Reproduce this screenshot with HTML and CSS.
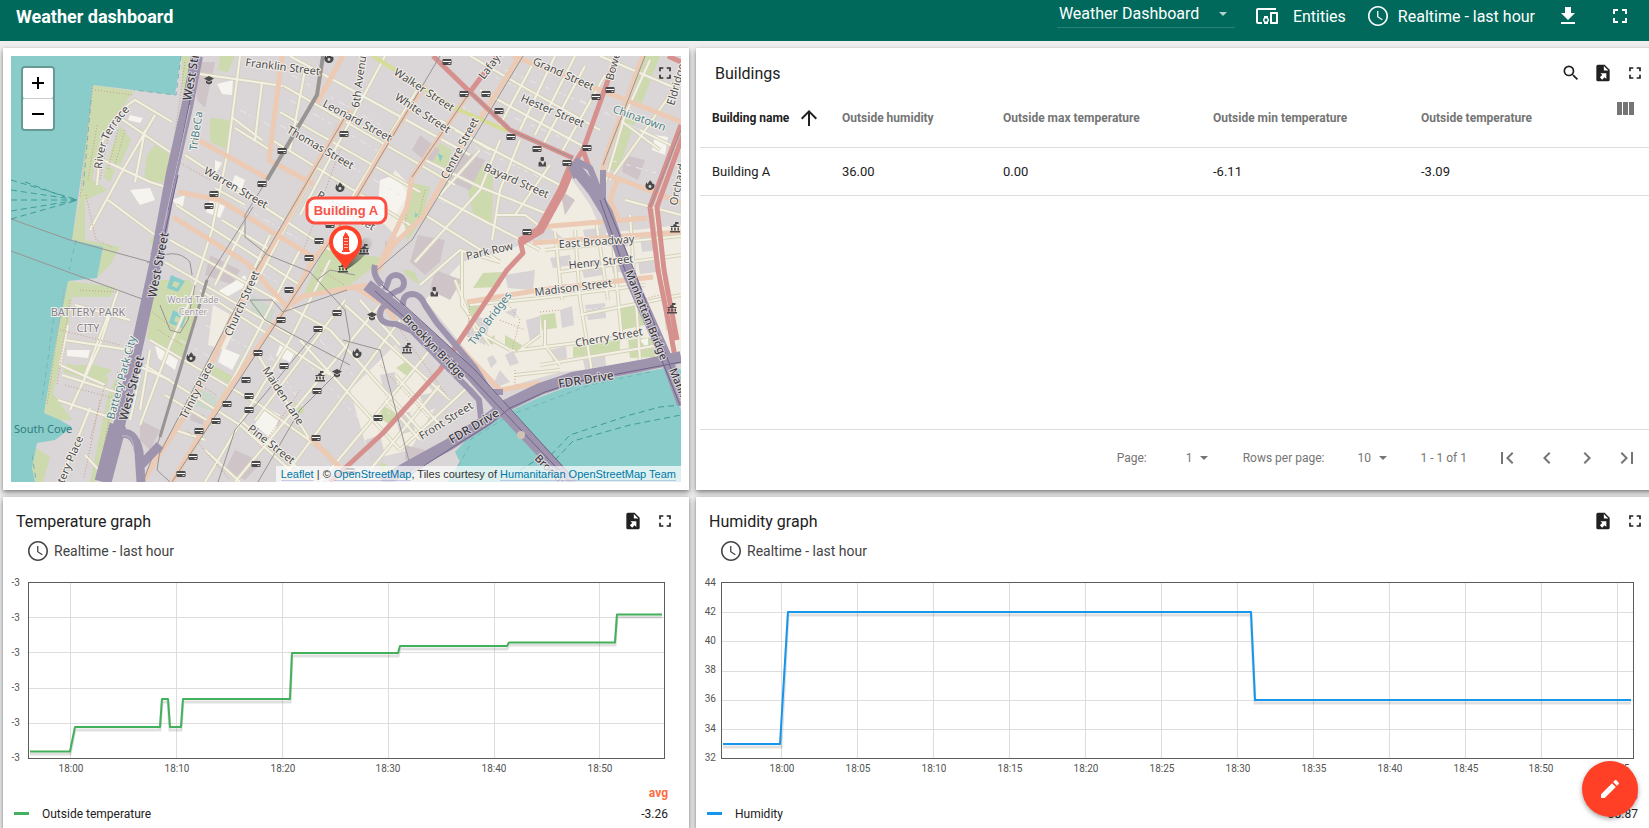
FILE: index.html
```html
<!DOCTYPE html>
<html lang="en">
<head>
<meta charset="utf-8">
<title>Weather dashboard</title>
<meta name="viewport" content="width=device-width, initial-scale=1">
<link rel="stylesheet" href="styles.css">
</head>
<body>
<svg class="sprite" aria-hidden="true">
  <symbol id="i-full" viewBox="0 0 24 24"><path d="M7 14H5v5h5v-2H7v-3zm-2-4h2V7h3V5H5v5zm12 7h-3v2h5v-5h-2v3zM14 5v2h3v3h2V5h-5z"/></symbol>
  <symbol id="i-search" viewBox="0 0 24 24"><path d="M15.5 14h-.79l-.28-.27A6.47 6.47 0 0 0 16 9.5 6.5 6.5 0 1 0 9.5 16c1.61 0 3.09-.59 4.23-1.57l.27.28v.79l5 4.99L20.49 19l-4.99-5zm-6 0C7.01 14 5 11.99 5 9.5S7.01 5 9.5 5 14 7.01 14 9.5 11.99 14 9.5 14z"/></symbol>
  <symbol id="i-export" viewBox="0 0 24 24"><path fill-rule="evenodd" d="M6 2C4.89 2 4 2.9 4 4v16a2 2 0 0 0 2 2h12a2 2 0 0 0 2-2V8l-6-6H6zm7 1.500L18.500 9H13V3.500zM8.930 12.220H16v7.070l-2.120-2.120L11.050 20l-2.830-2.830 2.830-2.820-2.120-2.130z"/></symbol>
  <symbol id="i-download" viewBox="0 0 24 24"><path d="M19 9h-4V3H9v6H5l7 7 7-7zM5 18v2h14v-2H5z"/></symbol>
  <symbol id="i-devices" viewBox="0 0 24 24"><path d="M3 6h18V4H3c-1.1 0-2 .9-2 2v12c0 1.1.9 2 2 2h4v-2H3V6zm10 6H9v1.78c-.61.55-1 1.33-1 2.22s.39 1.67 1 2.22V20h4v-1.78c.61-.55 1-1.34 1-2.22s-.39-1.67-1-2.22V12zm-2 5.5c-.83 0-1.5-.67-1.5-1.5s.67-1.5 1.5-1.5 1.5.67 1.5 1.5-.67 1.5-1.5 1.5zM22 8h-6c-.5 0-1 .5-1 1v10c0 .5.5 1 1 1h6c.5 0 1-.5 1-1V9c0-.5-.5-1-1-1zm-1 10h-4v-8h4v8z"/></symbol>
  <symbol id="i-clock" viewBox="0 0 24 24"><path d="M11.99 2C6.47 2 2 6.48 2 12s4.47 10 9.99 10C17.52 22 22 17.52 22 12S17.52 2 11.99 2zM12 20.4c-4.6 0-8.4-3.8-8.4-8.4S7.4 3.6 12 3.6s8.4 3.8 8.4 8.4-3.8 8.4-8.4 8.4z"/><path d="M12.4 7H11.1v6l4.9 3.3.7-1.1-4.3-2.8z"/></symbol>
  <symbol id="i-columns" viewBox="0 0 24 24"><path d="M10 18h5V5h-5v13zm-6 0h5V5H4v13zM16 5v13h5V5h-5z"/></symbol>
  <symbol id="i-up" viewBox="0 0 24 24"><path d="M4 12l1.41 1.41L11 7.83V20h2V7.83l5.58 5.59L20 12l-8-8-8 8z"/></symbol>
  <symbol id="i-first" viewBox="0 0 24 24"><path d="M18.41 16.59L13.82 12l4.59-4.59L17 6l-6 6 6 6zM6 6h2v12H6z"/></symbol>
  <symbol id="i-prev" viewBox="0 0 24 24"><path d="M15.41 7.41L14 6l-6 6 6 6 1.41-1.41L10.83 12z"/></symbol>
  <symbol id="i-next" viewBox="0 0 24 24"><path d="M10 6L8.59 7.41 13.17 12l-4.58 4.59L10 18l6-6z"/></symbol>
  <symbol id="i-last" viewBox="0 0 24 24"><path d="M5.59 7.41L10.18 12l-4.59 4.59L7 18l6-6-6-6zM16 6h2v12h-2z"/></symbol>
  <symbol id="i-edit" viewBox="0 0 24 24"><path d="M3 17.25V21h3.75L17.81 9.94l-3.75-3.75L3 17.25zM20.71 7.04c.39-.39.39-1.02 0-1.41l-2.34-2.34c-.39-.39-1.02-.39-1.41 0l-1.83 1.83 3.75 3.75 1.83-1.83z"/></symbol>
  <symbol id="i-caret" viewBox="0 0 10 5"><path d="M0 0h10L5 5z"/></symbol>
</svg>

<header class="topbar">
  <h1 class="topbar-title">Weather dashboard</h1>
  <nav class="topbar-nav">
    <label class="state-select">
      <select aria-label="Dashboard"><option>Weather Dashboard</option></select>
      <svg class="caret"><use href="#i-caret"/></svg>
    </label>
    <button class="nav-button entities" type="button"><svg class="icon"><use href="#i-devices"/></svg>Entities</button>
    <button class="nav-button time" type="button"><svg class="icon"><use href="#i-clock"/></svg>Realtime - last hour</button>
    <button class="nav-button download" type="button" aria-label="Export"><svg class="icon"><use href="#i-download"/></svg></button>
    <button class="nav-button fullscreen" type="button" aria-label="Fullscreen"><svg class="icon"><use href="#i-full"/></svg></button>
  </nav>
</header>

<main class="dashboard">
  <section class="card map-card" aria-label="Map">
    <div class="map">
      <svg class="map-canvas" viewBox="11 56 670 426" preserveAspectRatio="xMidYMid slice" role="img" aria-label="Lower Manhattan">
        <defs>
          <linearGradient id="shade" x1="0" y1="1" x2="1" y2="0"><stop offset="0" stop-color="#222" stop-opacity=".7"/><stop offset="1" stop-color="#222" stop-opacity="0"/></linearGradient>
          <g id="bus"><rect x="-4.5" y="-3" width="9" height="6" rx="1"/><path d="M-4 -.5H4" stroke="#fff" stroke-width="1"/><path d="M1.500 1.500H3.500" stroke="#fff" stroke-width=".8"/></g>
          <g id="fire"><path d="M-4.5 0C-5 3 -2 5 0 5S5 3 4.5 0C4 -2 3 -1 2.500 -1C2.500 -3 1 -3 0 -5C-.5 -3 -2 -3 -2 -1C-3 -1 -3 -2 -3.500 -3Z"/><circle cy="1.500" r="1.400" fill="#ddd"/></g>
          <g id="cap"><path d="M-5 -1.500L0 -4L5 -1.500L0 1.500ZM-3 .5L0 2.500L3 .5V3L0 4.500L-3 3Z"/></g>
          <g id="hall"><path d="M-5 4H5V5.500H-5ZM-4 -1H4L5 0H-5ZM-4 .5H-2.500V3.500H-4ZM-.8 .5H.8V3.500H-.8ZM2.500 .5H4V3.500H2.500ZM-2 -1A2 2 0 0 1 2 -1ZM0 -5H3.500V-3H.8V-1H0Z"/></g>
          <g id="cop"><rect x="-1.500" y="-5" width="3.500" height="4" rx="1"/><path d="M-3.500 4.500V1Q-3.500 -.5 -1.500 -.5L1 3L3 -1L4 1V4.500Z"/></g>
          <g id="streets">
            <path d="M200 74L283 86M290 56L470 155M284 86L455 185M280 112L420 192M272 140L410 225M185 155L330 250M176 205L300 285M170 240L330 330M165 262L290 335M200 290L330 375M150 340L260 405L330 455M145 365L240 425L290 470M165 395L215 425M175 430L205 440M205 450L240 482M233 118L262 140M235 128L270 150M215 188L245 205M222 220L270 250"/>
            <path d="M240 56L228 150L212 230L190 300L170 345L140 425M262 82L255 140M305 70L290 150M385 56L300 215M420 85L335 225M347 110L255 285M245 225L215 285M270 235L225 330M300 250L235 375L190 455M330 260L290 340L205 482M250 290L205 370"/>
            <path d="M470 56L520 85L600 130M480 90L590 150M455 130L560 185M425 160L480 187L550 215M440 120L490 150M555 56L520 130M585 66L540 150M605 75L560 155M535 60L500 125M575 56L535 135M500 140L480 190L415 262M480 150L440 195M520 140L500 190L492 240M550 165L515 215M435 195L540 250M425 215L500 262M600 56L680 90M620 120L660 150M650 60L625 115L600 200M670 95L610 180M640 130L681 150M625 200L681 215M497 215H525L545 230"/>
            <path d="M545 250L681 236M560 272L681 255M580 315L681 295M470 305L540 298L645 285M545 320L545 345L560 365M575 230L580 300L592 372M555 232L562 300M596 220L608 300M630 215L640 360M655 210L668 330M610 210L622 340M540 335L520 350L640 335M515 375L560 370M540 365L660 345M455 280L475 330L510 350M462 250V305L490 345M420 285L460 250L500 262"/>
            <path d="M258 355L310 440M240 420L315 482M300 340L400 450M330 330L420 430M345 305L450 400M360 300L400 345M400 320L280 482M430 350L320 482M440 385L370 470M380 305L235 482M345 300L255 420M470 385L400 450M385 400L420 440M395 375L440 425"/>
            <path d="M97 185L100 150Q110 115 135 100L172 122M120 118L170 152M155 115L120 175L90 230M103 160L150 182L166 187M108 200L155 235M145 130L135 182M118 290L100 345L70 410M65 340L130 350M62 375L125 395M58 400L112 418M90 408L60 482M125 360L170 380M150 350L140 410M85 455L110 482M68 325L60 365L105 385M110 310L85 375M140 375L130 420M75 305L130 320"/>
          </g>
        </defs>
        <rect class="land" x="11" y="56" width="670" height="426"/>
        <path class="pale" d="M462 262L540 240L681 225V360L560 372L497 390L462 345L425 300Z M213 305L240 320L225 350L208 345Z M395 170L425 200L400 240L375 215Z M350 390L395 345L440 400L410 450L370 460Z M567 172L590 205L620 270L580 250L545 225Z"/>
        <path class="park" d="M93 85L134 91L125 103L108 125L98 150L92 180L108 190L85 200L85 240L120 247L110 265L97 278L103 247L72 240L80 197Z
          M155 145L170 155L167 183L144 180L147 155Z M210 118L231 120L228 150L210 142Z M220 56H235L228 72L218 70Z M182 56H190L188 90L182 95Z
          M480 163L493 173L492 227L473 213L467 187Z M412 183L430 187L423 217L407 242L404 220Z M440 143L452 150L446 172L428 160Z
          M643 56H660L642 103L632 100Z M625 110L637 117L617 173L607 167Z M330 240L362 255L385 258L350 285L303 296L318 262Z
          M157 280H190L200 300L183 357L147 338L152 293Z M68 281L115 287L110 297L72 297L67 337L53 393L72 420L60 420L44 413L55 347Z
          M67 363L108 377L107 385L63 372Z M35 447L50 457L43 482H35L32 468Z M108 395L120 370L110 430L95 482H90Z M155 235L165 215L158 262L150 240Z
          M213 365L235 378L230 384L210 373Z M483 273L503 272L500 287L473 288Z M540 315L555 313L557 328L542 330Z M573 347L620 340V352L573 357Z
          M628 340L653 337L655 357L630 358Z M620 307L643 300L645 325L622 330Z M467 302L482 300L473 320Z M403 269L415 272L420 285L405 275Z M112 370L100 380L75 365H95Z
          M120 125L131 140L120 165L108 160Z M106 165L115 170L110 182L104 178Z M383 405L397 415L390 425L380 418Z M405 362L415 370L410 378L396 368Z M485 340L495 335L493 345Z M505 335L522 345L518 352L505 345Z M398 388L392 398Z M381 462L395 470L388 475L378 470Z M292 400L305 410L300 415Z"/>
        <path class="sage" d="M195 387L217 397L215 412L193 405Z M252 295L275 310L270 325L250 315Z"/>
        <path class="water-fill" d="M11 56H181L175 95L134 90L93 85L85 150L72 240L103 247L97 278L68 281L55 347L44 413L60 420L72 427L55 440L37 443L32 468L35 482H11Z
          M508 412L540 397L573 385L665 368L681 410V482H447L460 462L455 452L473 433L493 420Z M681 370V395L675 366Z
          M171 275L185 281L178 292L167 288Z M173 310L186 317L182 328L169 323Z M438 153L443 156L440 162Z M415 212L418 215L415 218Z"/>
        <path class="inner" d="M174 281L180 283L177 288L172 286Z M176 316L181 318L178 323L174 321Z"/>
        <path class="pink" d="M195 62H215L205 108L197 100Z M420 135L440 150L430 165L412 150Z M460 150L485 160L470 190L445 180Z M418 235L445 240L440 262L425 275L410 262Z M435 270L462 280L450 300L430 290Z M625 155L645 160L638 180L622 172Z M192 412L205 415L203 425L190 420Z M235 450L262 462L245 480L225 470Z M140 420L160 430L150 450L140 440Z M405 445L425 450L420 465L405 460Z M210 255L240 270L232 285L205 275Z M385 240L395 247L385 258Z M345 248L358 256L348 264L335 256Z M560 190L575 200L565 215Z"/>
        <path class="houses" d="M470 315L490 320L485 345L465 335ZM526 320L540 316V338L530 342ZM580 262L600 259L603 275L584 278ZM610 258L628 255L632 270L613 273ZM585 305L605 303L606 318L588 320ZM550 258L570 255L572 265L553 268ZM583 230L605 227L606 235L585 238ZM640 236L655 234L658 250L642 252ZM583 360L605 355L606 366L585 369ZM505 312L517 308L515 318ZM505 275L535 270L533 290L508 288ZM490 390L500 370L510 382ZM400 350L415 345L420 360L405 362ZM380 375L395 372L398 390L385 395ZM420 395L440 392L445 405L425 412ZM395 415L410 412L415 430L400 435ZM365 440L380 435L385 455L370 462ZM557 285L566 284L568 296L560 297ZM487 358L493 355L497 362L491 368ZM505 355L513 351L519 363L510 366ZM612 235L628 233L630 246L614 248ZM638 262L655 260L657 272L640 274ZM560 310L572 306L574 325L562 328ZM550 350L566 346L567 358L553 361Z"/>
        <path class="white" d="M217 84L233 80L232 95L222 94ZM130 115L143 118L140 123L128 120ZM217 292L245 275L248 285L225 298ZM223 348L240 355L232 370L218 362ZM262 405L280 415L272 440L255 425ZM155 345L178 360L175 370L158 358ZM67 350L90 350L88 358L67 356ZM215 160L222 163L215 175ZM380 180L395 175L408 195L395 215L378 205ZM655 135L668 137L665 155L652 150ZM640 340L648 338V350ZM130 190L150 188L155 200L140 205ZM395 195L400 200L393 205ZM172 200L185 195L182 210ZM280 345L295 352L290 362L276 356ZM235 175L245 180L240 195L230 188ZM210 200L225 206L220 218L206 212Z"/>
        <g class="specks"><path d="M300 62L345 88M292 75L380 125M290 100L380 152M280 125L400 195M240 205L300 240M190 230L290 290M240 110L275 128M480 70L545 100M490 108L580 145M460 140L545 180M505 70L600 110M460 105L490 125M580 100L640 130M440 200L530 245M560 240L681 228M570 265L681 248M585 310L660 300M300 355L360 420M270 355L305 410M320 340L400 425M205 325L290 370M180 340L250 380M610 160L681 180M640 75L681 90M500 250L545 225"/></g>
        <use href="#streets" class="street-case"/>
        <use href="#streets" class="street"/>
        <path class="paths" d="M93 85L80 197M95 90L132 95M86 195L96 240L112 247M97 125L88 180M110 128L100 180M118 130L108 170M125 130L115 165M185 62L170 170M172 190L150 255M64 290L47 405M70 300L57 385M80 290L118 292M100 400L84 478M118 372L98 478M105 385L90 440M158 330L182 345M150 310L175 330M210 180L175 160M60 330L120 345M65 385L120 400M410 185L405 225M425 190L418 220M340 150L300 260M320 270L345 285M470 300L468 340M505 300L520 320L512 350M515 370L515 385H540M540 312L560 310M400 330L450 400M380 365L430 420M500 320L525 330M640 300L660 295M200 385L218 396M187 430L230 480M300 390L260 450"/>
        <path class="orange" d="M198 140L267 178M282 56L269 160L313 184M178 192L220 200L313 257M173 217L247 263L287 307L303 296L367 285M343 56L317 103M425 85L387 143L333 237L313 260L290 303L263 340L233 383L203 430L172 482M350 110L317 163L287 220L258 270L233 317L200 387L180 423L160 453L143 482M470 92L412 177L407 207L377 270M520 56L487 108L460 150L423 217L395 243L375 275M513 56L593 87L681 122M603 173L640 187L681 203M617 180L610 200L618 218M540 227L647 218M533 243L681 232M467 302L540 290L653 277M643 56L607 153L602 172M460 348L500 390L540 383M310 437L350 478M355 287L385 305L395 320"/>
        <path class="yellow" d="M373 56L453 107L507 131"/>
        <path class="red" d="M433 56L470 92L510 130L573 158M470 92L497 56M617 56L607 83L583 150L570 170M520 240L523 253L507 270L460 340L440 370L383 433L330 482M681 125L650 207L658 270L670 330L676 362M683 135L657 207L664 270L677 340M583 150L590 170M668 56L681 62"/>
        <path class="red wide" d="M573 163L562 190L540 230L520 242"/>
        <path class="rail" d="M323 56L317 95L267 180L245 215L245 237L268 255L310 272L345 310L350 340L340 370L300 410L258 482M253 207L213 270L207 280L185 353L160 437L143 482M348 112L250 280L160 453M440 56L333 237L262 345L172 482M523 56L412 240L377 270M470 92L510 130L573 158M470 92L412 177M645 56L603 165M650 207L681 130M347 290L318 300L283 312L272 300L250 300L265 320L350 365M318 330L235 430L218 482M317 280L330 270L355 275M343 340L380 350L410 465M11 219L70 240L150 262M11 251L90 280L145 300M147 263Q175 245 190 262L192 275M160 305L170 330L180 333L188 320L195 285M160 450L157 470L170 482"/>
        <path class="rail thick" d="M323 56L317 95L267 180"/>
        <path class="rail mid" d="M207 280L185 353L160 437"/>
        <path class="ferry" d="M11 180L78 200M11 190L78 200M11 200H78M11 211L78 200M11 219L78 200M25 182L65 197M551 455L570 435L630 415L660 407L681 405M555 460L573 441L630 425L681 415M520 470L545 455"/>
        <path class="shore" d="M181 56L176 95L134 90M76 240L69 270M91 100L83 190M55 310L42 400M32 455L36 480M470 440L510 415L590 385L650 372M458 466L470 445"/>
        <g class="motor-case">
          <path class="west" d="M197 56L187 107L172 173L155 265L145 310L133 365L118 430"/>
          <path class="west-end" d="M118 425L103 482"/>
          <path class="ramp" d="M118 435Q134 428 139 452L141 482M160 445L141 465"/>
          <path class="bridge" d="M367 285L403 313L470 373L500 407L540 450L572 484M382 482L410 466L450 444L487 420L507 405L540 389L573 378L640 366L681 357M573 165L593 190L607 213L627 270L667 360L683 404"/>
          <path class="loop" d="M375 265Q372 275 382 285M385 290L388 282A8 8 0 1 1 397 291L388 296M403 306Q402 294 413 294Q421 295 425 305L437 323L475 368L490 392H503M407 313L392 305Q380 304 380 315Q380 324 396 324L412 331L445 365L470 390L479 400L481 418M575 160L590 168L605 205M576 178L572 168L574 162M603 170V205"/>
          <path class="lane" d="M375 291L403 316L470 376L570 482M382 285L415 315L475 370L575 480M405 478L450 449L490 424L510 408L545 392L575 382L681 362M600 200L625 270L680 405M604 198L634 270L681 395M190 100L168 210M178 175L160 255"/>
          <path class="lane-light" d="M190 105L163 230M122 436Q133 433 134 450"/>
        </g>
        <g class="poi">
          <use href="#bus" x="282" y="151"/><use href="#bus" x="262" y="184"/><use href="#bus" x="214" y="194"/><use href="#bus" x="209" y="206"/><use href="#bus" x="319" y="241"/><use href="#bus" x="309" y="258"/><use href="#bus" x="330" y="225"/><use href="#bus" x="344" y="134"/>
          <use href="#bus" x="447" y="62"/><use href="#bus" x="464" y="94"/><use href="#bus" x="486" y="94"/><use href="#bus" x="499" y="111"/><use href="#bus" x="511" y="137"/><use href="#bus" x="537" y="149"/><use href="#bus" x="567" y="163"/><use href="#bus" x="587" y="148"/><use href="#bus" x="596" y="97"/><use href="#bus" x="610" y="90"/><use href="#bus" x="527" y="232"/>
          <use href="#bus" x="289" y="290"/><use href="#bus" x="281" y="320"/><use href="#bus" x="318" y="329"/><use href="#bus" x="337" y="313"/><use href="#bus" x="258" y="353"/><use href="#bus" x="284" y="366"/><use href="#bus" x="246" y="380"/><use href="#bus" x="249" y="396"/><use href="#bus" x="249" y="410"/><use href="#bus" x="227" y="404"/><use href="#bus" x="216" y="421"/><use href="#bus" x="199" y="431"/><use href="#bus" x="193" y="457"/><use href="#bus" x="181" y="474"/><use href="#bus" x="256" y="464"/><use href="#bus" x="316" y="438"/><use href="#bus" x="317" y="391"/><use href="#bus" x="378" y="418"/><use href="#bus" x="350" y="471"/>
          <use href="#fire" x="329" y="58"/><use href="#fire" x="340" y="187"/><use href="#fire" x="650" y="185"/><use href="#fire" x="191" y="357"/><use href="#fire" x="357" y="353"/>
          <use href="#cap" x="209" y="80"/><use href="#cap" x="337" y="373"/><use href="#cap" x="372" y="316"/>
          <use href="#hall" x="675" y="227"/><use href="#hall" x="364" y="249"/><use href="#hall" x="320" y="376"/><use href="#hall" x="407" y="348"/><use href="#hall" x="672" y="308"/><use href="#hall" x="343" y="267"/>
          <use href="#cop" x="542" y="162"/><use href="#cop" x="434" y="292"/>
          <circle cx="521" cy="435" r="4" fill="#cfc4b4"/>
        </g>
        <g class="names">
          <text transform="translate(245 66) rotate(7)">Franklin Street</text>
          <text transform="translate(322 106) rotate(28)">Leonard Street</text>
          <text transform="translate(286 132) rotate(30)">Thomas Street</text>
          <text transform="translate(203 173) rotate(30)">Warren Street</text>
          <text transform="translate(316 197) rotate(31)">Reade Street</text>
          <text transform="translate(393 74) rotate(33)">Walker Street</text>
          <text transform="translate(394 99) rotate(33)">White Street</text>
          <text transform="translate(532 64) rotate(24)">Grand Street</text>
          <text transform="translate(520 101) rotate(23)">Hester Street</text>
          <text transform="translate(483 170) rotate(24)">Bayard Street</text>
          <text transform="translate(467 260) rotate(-13)">Park Row</text>
          <text transform="translate(559 248) rotate(-4)">East Broadway</text>
          <text transform="translate(569 269) rotate(-6)">Henry Street</text>
          <text transform="translate(535 296) rotate(-7)">Madison Street</text>
          <text transform="translate(576 347) rotate(-10)">Cherry Street</text>
          <text transform="translate(422 440) rotate(-32)">Front Street</text>
          <text transform="translate(447 180) rotate(-62)">Centre Street</text>
          <text transform="translate(359 108) rotate(-82)">6th Avenue</text>
          <text transform="translate(484 80) rotate(-53)">Lafayette</text>
          <text transform="translate(613 81) rotate(-75)">Bowery</text>
          <text transform="translate(674 106) rotate(-74)">Eldridge</text>
          <text transform="translate(677 206) rotate(-78)">Orchard</text>
          <text><textPath href="#terrace">River Terrace</textPath></text>
          <text transform="translate(231 337) rotate(-66)">Church Street</text>
          <text transform="translate(186 420) rotate(-63)">Trinity Place</text>
          <text transform="translate(262 370) rotate(57)">Maiden Lane</text>
          <text transform="translate(247 430) rotate(38)">Pine Street</text>
          <text transform="translate(57 500) rotate(-67)">Battery Place</text>
          <g class="major">
            <text transform="translate(191 101) rotate(-80)">West Street</text>
            <text transform="translate(156 298) rotate(-79)">West Street</text>
            <text transform="translate(127 421) rotate(-75)">West Street</text>
            <text transform="translate(559 388) rotate(-9)">FDR Drive</text>
            <text transform="translate(452 444) rotate(-31)">FDR Drive</text>
            <g class="snug">
              <text transform="translate(402 319) rotate(46)">Brooklyn Bridge</text>
              <text transform="translate(534 459) rotate(45)">Brooklyn Bridge</text>
              <text transform="translate(625 272) rotate(68)">Manhattan Bridge</text>
              <text transform="translate(669 370) rotate(68)">Manhattan</text>
            </g>
          </g>
          <g class="area">
            <text transform="translate(612 112) rotate(20)">Chinatown</text>
            <text transform="translate(474 346) rotate(-53)">Two Bridges</text>
            <text transform="translate(197 151) rotate(-82)">TriBeCa</text>
            <text transform="translate(114 420) rotate(-75)">Battery Park City</text>
            <text class="cove" x="14" y="433">South Cove</text>
          </g>
          <g class="place"><text x="88" y="316">BATTERY PARK</text><text x="88" y="332">CITY</text></g>
          <g class="place small"><text x="193" y="303">World Trade</text><text x="193" y="315">Center</text></g>
        </g>
        <path id="terrace" fill="none" d="M102 169Q103 135 132 108L140 100"/>
        <g class="marker">
          <path class="marker-shade" d="M346 270L355 250L364 238Q374 236 372 244Q366 258 346 270Z" fill="url(#shade)"/>
          <rect x="307" y="198" width="79" height="25" rx="8"/>
          <text x="346" y="215">Building A</text>
          <path class="pin" d="M345.500 225.500A16.500 16.500 0 0 1 362 242C362 254 350 260 345.500 270C341 260 329 254 329 242A16.500 16.500 0 0 1 345.500 225.500Z"/>
          <circle cx="345.500" cy="242" r="12.500"/>
          <path class="tower" d="M345.500 232L348 235V236H349V250.500H350V252H342V250.500H343V236H344V235Z"/>
          <path class="tower-lines" d="M344 238.500H348M344 241.500H348M344 244.500H348M344 247.500H348"/>
        </g>
      </svg>
      <div class="zoom-control">
        <button type="button" aria-label="Zoom in"><svg viewBox="0 0 12 12"><path d="M6 0V12M0 6H12"/></svg></button>
        <button type="button" aria-label="Zoom out"><svg viewBox="0 0 12 12"><path d="M0 6H12"/></svg></button>
      </div>
      <button class="icon-button map-full" type="button" aria-label="Fullscreen"><svg class="icon small-icon"><use href="#i-full"/></svg></button>
      <p class="attribution"><a href="#leaflet">Leaflet</a> | © <a href="#osm">OpenStreetMap</a>, Tiles courtesy of <a href="#hot">Humanitarian OpenStreetMap Team</a></p>
    </div>
  </section>

  <section class="card table-card">
    <div class="card-head table-head">
      <h2>Buildings</h2>
      <div class="card-actions">
        <button class="icon-button" type="button" aria-label="Search"><svg class="icon small-icon"><use href="#i-search"/></svg></button>
        <button class="icon-button" type="button" aria-label="Export"><svg class="icon small-icon"><use href="#i-export"/></svg></button>
        <button class="icon-button" type="button" aria-label="Fullscreen"><svg class="icon small-icon"><use href="#i-full"/></svg></button>
      </div>
    </div>
    <table class="entities-table">
      <colgroup><col class="c-name"><col class="c-hum"><col class="c-max"><col class="c-min"><col><col class="c-tools"></colgroup>
      <thead>
        <tr>
          <th class="sorted" scope="col"><span class="sort">Building name<svg class="icon"><use href="#i-up"/></svg></span></th>
          <th scope="col">Outside humidity</th>
          <th scope="col">Outside max temperature</th>
          <th scope="col">Outside min temperature</th>
          <th scope="col">Outside temperature</th>
          <td class="tools"><button class="icon-button" type="button" aria-label="Columns to display"><svg class="icon"><use href="#i-columns"/></svg></button></td>
        </tr>
      </thead>
      <tbody>
        <tr><td>Building A</td><td>36.00</td><td>0.00</td><td>-6.11</td><td>-3.09</td><td></td></tr>
      </tbody>
    </table>
    <div class="pager">
      <label class="pager-field page">Page:<span class="pick"><select><option>1</option></select><svg class="caret"><use href="#i-caret"/></svg></span></label>
      <label class="pager-field rows">Rows per page:<span class="pick"><select><option>10</option></select><svg class="caret"><use href="#i-caret"/></svg></span></label>
      <span class="range">1 - 1 of 1</span>
      <div class="pager-buttons">
        <button class="icon-button" type="button" aria-label="First page"><svg class="icon"><use href="#i-first"/></svg></button>
        <button class="icon-button" type="button" aria-label="Previous page"><svg class="icon"><use href="#i-prev"/></svg></button>
        <button class="icon-button" type="button" aria-label="Next page"><svg class="icon"><use href="#i-next"/></svg></button>
        <button class="icon-button" type="button" aria-label="Last page"><svg class="icon"><use href="#i-last"/></svg></button>
      </div>
    </div>
  </section>

  <section class="card chart-card">
    <div class="card-head">
      <h2>Temperature graph</h2>
      <div class="card-actions">
        <button class="icon-button" type="button" aria-label="Export"><svg class="icon small-icon"><use href="#i-export"/></svg></button>
        <button class="icon-button" type="button" aria-label="Fullscreen"><svg class="icon small-icon"><use href="#i-full"/></svg></button>
      </div>
    </div>
    <button class="time-window" type="button"><svg class="icon"><use href="#i-clock"/></svg>Realtime - last hour</button>
    <svg class="chart" viewBox="3 570 686 205" role="img" aria-label="Temperature graph">
      <path class="grid" d="M70.500 583V758M176.500 583V758M282.500 583V758M388.500 583V758M494.500 583V758M599.500 583V758M29 617.500H664M29 652.500H664M29 688.500H664M29 723.500H664"/>
      <rect class="frame" x="28.500" y="582.500" width="636" height="176"/>
      <path class="line-shade" d="M30 754H70L75 730H160L162 702H168L170 730H181L183 702H290L292 656H398L400 649H507L509 645H615L617 617H662"/>
      <path class="line green" d="M30 751.500H70L75 727H160L162 699H168L170 727H181L183 699H290L292 653H398L400 646H507L509 642.500H615L617 614.500H662"/>
      <g class="ticks y"><text x="20" y="586">-3</text><text x="20" y="621">-3</text><text x="20" y="656">-3</text><text x="20" y="691">-3</text><text x="20" y="726">-3</text><text x="20" y="761">-3</text></g>
      <g class="ticks x"><text x="71" y="772">18:00</text><text x="177" y="772">18:10</text><text x="283" y="772">18:20</text><text x="388" y="772">18:30</text><text x="494" y="772">18:40</text><text x="600" y="772">18:50</text></g>
    </svg>
    <table class="legend">
      <thead><tr><td></td><td></td><th scope="col">avg</th></tr></thead>
      <tbody><tr><td class="swatch-cell"><span class="swatch green-bg"></span></td><td>Outside temperature</td><td class="value">-3.26</td></tr></tbody>
    </table>
  </section>

  <section class="card chart-card">
    <div class="card-head">
      <h2>Humidity graph</h2>
      <div class="card-actions">
        <button class="icon-button" type="button" aria-label="Export"><svg class="icon small-icon"><use href="#i-export"/></svg></button>
        <button class="icon-button" type="button" aria-label="Fullscreen"><svg class="icon small-icon"><use href="#i-full"/></svg></button>
      </div>
    </div>
    <button class="time-window" type="button"><svg class="icon"><use href="#i-clock"/></svg>Realtime - last hour</button>
    <svg class="chart" viewBox="696 570 963 205" role="img" aria-label="Humidity graph">
      <path class="grid" d="M781.500 583V758M857.500 583V758M933.500 583V758M1009.500 583V758M1085.500 583V758M1161.500 583V758M1237.500 583V758M1313.500 583V758M1389.500 583V758M1465.500 583V758M1541.500 583V758M1617.500 583V758M722 612.500H1633M722 641.500H1633M722 671.500H1633M722 700.500H1633M722 729.500H1633"/>
      <rect class="frame" x="721.500" y="582.500" width="912" height="176"/>
      <path class="line-shade" d="M723 747H781L788 615H1251L1255 703H1631"/>
      <path class="line blue" d="M723 744H780L788 612H1251L1255 700H1631"/>
      <g class="ticks y"><text x="716" y="586">44</text><text x="716" y="615">42</text><text x="716" y="644">40</text><text x="716" y="673">38</text><text x="716" y="702">36</text><text x="716" y="732">34</text><text x="716" y="761">32</text></g>
      <g class="ticks x"><text x="782" y="772">18:00</text><text x="858" y="772">18:05</text><text x="934" y="772">18:10</text><text x="1010" y="772">18:15</text><text x="1086" y="772">18:20</text><text x="1162" y="772">18:25</text><text x="1238" y="772">18:30</text><text x="1314" y="772">18:35</text><text x="1390" y="772">18:40</text><text x="1466" y="772">18:45</text><text x="1541" y="772">18:50</text><text x="1617" y="772">18:55</text></g>
    </svg>
    <table class="legend">
      <thead><tr><td></td><td></td><th scope="col">avg</th></tr></thead>
      <tbody><tr><td class="swatch-cell"><span class="swatch blue-bg"></span></td><td>Humidity</td><td class="value">38.87</td></tr></tbody>
    </table>
  </section>
</main>

<button class="fab" type="button" aria-label="Edit dashboard"><svg class="icon"><use href="#i-edit"/></svg></button>
</body>
</html>
```

FILE: styles.css
```css
* { box-sizing: border-box; }
body {
  margin: 0;
  min-height: 100vh;
  display: flex;
  flex-direction: column;
  overflow: hidden;
  background: #eee;
  color: #212121;
  font-family: Roboto, "Liberation Sans", sans-serif;
  font-size: 13px;
}
h1, h2, p { margin: 0; }
button, select {
  margin: 0;
  padding: 0;
  border: 0;
  background: none;
  color: inherit;
  font: inherit;
  cursor: pointer;
}
select { appearance: none; }
.sprite { position: absolute; width: 0; height: 0; }
.icon { width: 24px; height: 24px; fill: currentColor; flex: none; display: block; }
.small-icon { width: 20px; height: 20px; }
.icon-button { display: grid; place-items: center; width: 32px; height: 32px; }

/* Top bar */
.topbar {
  display: flex;
  justify-content: space-between;
  align-items: flex-start;
  min-height: 41px;
  padding: 0 17px 0 16px;
  background: #00695c;
  color: #fff;
}
.topbar-title { font-size: 18px; font-weight: 700; line-height: 34px; }
.topbar-nav { display: flex; align-items: center; min-height: 32px; font-size: 16px; }
.state-select {
  display: flex;
  align-items: center;
  width: 178px;
  height: 24px;
  margin-right: 20px;
  padding: 0 8px 4px 2px;
  border-bottom: 1px solid #2b8177;
}
.state-select select { flex: 1; }
.state-select .caret { color: #b2d2ce; }
.caret { width: 8px; height: 4px; fill: currentColor; flex: none; }
.nav-button { display: flex; align-items: center; gap: 8px; }
.entities { gap: 14px; margin-right: 20px; }
.time { margin-right: 21px; }
.download { margin-right: 28px; }

/* Grid of widgets */
.dashboard {
  flex: 1;
  display: grid;
  grid-template-columns: 686fr 963fr;
  grid-template-rows: auto 1fr;
  gap: 7px;
  margin-right: -10px;
  padding: 7px 0 0 3px;
}
.card {
  display: flex;
  flex-direction: column;
  min-width: 0;
  background: #fff;
  box-shadow: 0 3px 6px rgba(0, 0, 0, .35), 0 1px 3px rgba(0, 0, 0, .2);
}
.card-head {
  display: flex;
  justify-content: space-between;
  align-items: center;
  height: 32px;
  margin-top: 8px;
  padding: 0 8px 0 13px;
}
.card-head h2 { font-size: 16px; font-weight: 400; }
.card-actions { display: flex; }

/* Map */
.map-card { padding: 8px; }
.map { position: relative; flex: 1; overflow: hidden; }
.map-canvas { display: block; width: 100%; height: 100%; }
.land { fill: #dad5d6; }
.pale { fill: #f0ece2; }
.park { fill: #cddaae; }
.sage { fill: #cbd8cb; }
.water-fill { fill: #8accca; }
.inner { fill: #cddaae; }
.pink { fill: #cfc5c8; }
.white { fill: #f6f4ee; }
.houses { fill: #d8d3d4; }
.specks { fill: none; stroke: #ebe8e9; stroke-width: 1; stroke-dasharray: 7 3 2 5 4 6; }
.street-case { fill: none; stroke: #d5d2b9; stroke-width: 4; }
.street { fill: none; stroke: #f3f1e6; stroke-width: 2; }
.paths { fill: none; stroke: #c79f88; stroke-width: 1; stroke-dasharray: 1 2; }
.orange { fill: none; stroke: #eccab3; stroke-width: 5; stroke-linejoin: round; }
.yellow { fill: none; stroke: #d6dc94; stroke-width: 4; }
.red { fill: none; stroke: #d6918f; stroke-width: 5; stroke-linejoin: round; }
.wide { stroke-width: 9; }
.rail { fill: none; stroke: #989494; stroke-width: 1; stroke-linejoin: round; }
.thick { stroke-width: 4; }
.mid { stroke-width: 3; }
.ferry { fill: none; stroke: #3f9c97; stroke-width: 1; stroke-dasharray: 6 4; }
.shore { fill: none; stroke: #79b4b5; stroke-width: 1; stroke-dasharray: 5 4; }
.motor-case { fill: none; stroke: #9f94ae; stroke-linejoin: round; }
.west { stroke-width: 12; }
.west-end { stroke-width: 17; }
.ramp { stroke-width: 9; }
.bridge { stroke-width: 12; }
.loop { stroke-width: 6; }
.lane { stroke: #70638a; stroke-width: 1; }
.lane-light { stroke: #c5bdcd; stroke-width: 1; }
.poi { fill: #4a4a4a; }
.names {
  font-family: "Noto Sans", sans-serif;
  font-size: 11px;
  fill: #4b4b4b;
  stroke: #f4f1ec;
  stroke-width: 2px;
  stroke-linejoin: round;
  paint-order: stroke;
}
.major { font-weight: 500; font-size: 12px; fill: #3c3c3c; stroke: #dcd7e0; }
.snug { font-size: 11px; }
.area { fill: #4d8088; }
.cove { stroke: none; fill: #2f7f80; }
.place { fill: #85818d; text-anchor: middle; }
.place.small { font-size: 9px; fill: #a09aa6; }
.marker rect { fill: #fff; fill-opacity: .9; stroke: #ff4d40; stroke-width: 3; }
.marker text {
  fill: #f9544a;
  font: 700 13px "Liberation Sans", Arial, sans-serif;
  text-anchor: middle;
}
.marker circle { fill: #fff; }
.pin { fill: #ff4127; }
.tower { fill: #ff4127; }
.tower-lines { stroke: #ffb3a8; stroke-width: 1; }
.zoom-control {
  position: absolute;
  top: 10px;
  left: 10px;
  border: 2px solid rgba(0, 0, 0, .25);
  border-radius: 4px;
  background-clip: padding-box;
}
.zoom-control button {
  display: grid;
  place-items: center;
  width: 30px;
  height: 30px;
  background: #fff;
  border-radius: 2px;
}
.zoom-control button + button { border-top: 1px solid #ccc; height: 31px; }
.zoom-control svg { width: 12px; height: 12px; stroke: #000; stroke-width: 2; }
.map-full { position: absolute; top: 1px; right: 0; color: #333; }
.attribution {
  position: absolute;
  right: 0;
  bottom: 0;
  padding: 0 5px;
  background: rgba(255, 255, 255, .7);
  color: #333;
  font: 11px/16px "Liberation Sans", Arial, sans-serif;
}
.attribution a { color: #0078a8; text-decoration: none; border-bottom: 1px solid rgba(64, 84, 178, .25); }

/* Table widget */
.table-head { height: 34px; padding-left: 19px; }
.entities-table {
  margin: 0 0 0 4px;
  table-layout: fixed;
  border-collapse: collapse;
}
.c-name { width: 142px; }
.c-hum { width: 161px; }
.c-max { width: 210px; }
.c-min { width: 208px; }
.c-tools { width: 50px; }
.entities-table th, .entities-table td { padding: 0; text-align: left; white-space: nowrap; }
.entities-table th { height: 57px; color: #757575; font-size: 12px; font-weight: 700; }
.entities-table th:first-child, .entities-table tbody td:first-child { padding-left: 12px; }
.entities-table th.sorted { color: #212121; }
.sort { display: flex; align-items: center; gap: 8px; }
.entities-table .tools { vertical-align: top; padding-top: 3px; color: #757575; }
.entities-table tbody td { height: 48px; border-top: 1px solid #ddd; border-bottom: 1px solid #ddd; }
.pager {
  display: flex;
  justify-content: flex-end;
  align-items: center;
  height: 61px;
  margin: auto 0 0 4px;
  padding: 0 16px 4px 0;
  border-top: 1px solid #ddd;
  color: #757575;
  font-size: 12px;
}
.pager-field { display: flex; align-items: center; }
.page { gap: 39px; margin-right: 35px; }
.rows { gap: 33px; margin-right: 34px; }
.pick { display: flex; align-items: center; gap: 7px; }
.range { margin-right: 24px; }
.pager-buttons { display: flex; gap: 8px; }

/* Charts */
.time-window {
  display: flex;
  align-items: center;
  gap: 4px;
  align-self: flex-start;
  height: 28px;
  margin-left: 23px;
  color: #444;
  font-size: 14px;
}
.chart { display: block; width: 100%; height: auto; margin-top: 5px; }
.grid { fill: none; stroke: #ddd; stroke-width: 1; }
.frame { fill: none; stroke: #5c5c5c; stroke-width: 1; }
.line { fill: none; stroke-width: 2; stroke-linejoin: round; }
.line-shade { fill: none; stroke: rgba(0, 0, 0, .12); stroke-width: 3; }
.green { stroke: #43b05c; }
.blue { stroke: #1595ec; }
.ticks { fill: #545454; font-size: 10px; }
.x { text-anchor: middle; }
.y { text-anchor: end; }
.legend { width: calc(100% - 21px); margin-top: 7px; border-collapse: collapse; font-size: 12px; }
.legend td, .legend th { height: 21px; padding: 0; }
.legend th { color: #ff6e40; font-weight: 700; text-align: right; }
.legend .value { text-align: right; }
.legend td:first-child { width: 39px; padding-left: 11px; }
.swatch { display: block; width: 15px; height: 3px; }
.green-bg { background: #43b05c; }
.blue-bg { background: #1595ec; }

.fab {
  position: fixed;
  right: 11px;
  bottom: 11px;
  display: grid;
  place-items: center;
  width: 56px;
  height: 56px;
  border-radius: 50%;
  background: #ff4026;
  color: #fff;
  box-shadow: 0 2px 5px rgba(0, 0, 0, .35);
}
```
